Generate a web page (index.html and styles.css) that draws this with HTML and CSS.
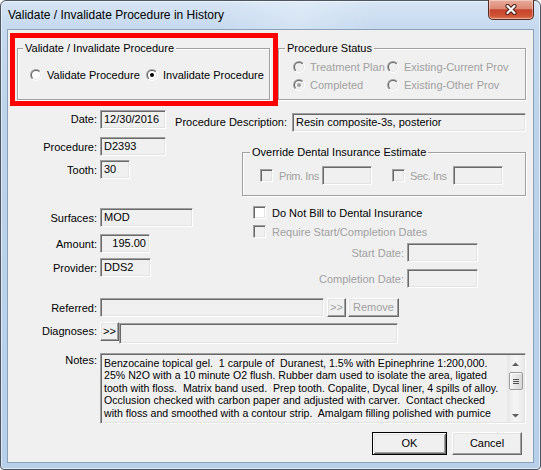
FILE: index.html
```html
<!DOCTYPE html>
<html>
<head>
<meta charset="utf-8">
<title>Validate / Invalidate Procedure in History</title>
<link rel="stylesheet" href="styles.css">
</head>
<body>
<svg class="defs" width="0" height="0" aria-hidden="true">
  <defs>
    <linearGradient id="rgo" x1="0" y1="0" x2="1" y2="1"><stop offset="0.5" stop-color="#a0a0a0"/><stop offset="0.5" stop-color="#ffffff"/></linearGradient>
    <linearGradient id="rgi" x1="0" y1="0" x2="1" y2="1"><stop offset="0.5" stop-color="#696969"/><stop offset="0.5" stop-color="#e3e3e3"/></linearGradient>
  </defs>
</svg>
<div class="window">
  <div class="titlebar">
    <span class="title">Validate / Invalidate Procedure in History</span>
    <div class="close">
      <svg width="14" height="11" viewBox="0 0 14 11"><path d="M3.5 2 L10.5 9 M10.5 2 L3.5 9" stroke="#4a1d16" stroke-width="4.2" stroke-linecap="round"/><path d="M3.5 2 L10.5 9 M10.5 2 L3.5 9" stroke="#ffffff" stroke-width="2.2" stroke-linecap="round"/></svg>
    </div>
  </div>
  <div class="client">
    <div class="highlight"></div>

    <div class="top-row">
      <fieldset class="group g1">
        <legend>Validate / Invalidate Procedure</legend>
        <div class="radios r1">
          <label class="opt o1"><svg class="rb" viewBox="0 0 12 12"><circle cx="6" cy="6" r="6" fill="url(#rgo)"/><circle cx="6" cy="6" r="5" fill="url(#rgi)"/><circle cx="6" cy="6" r="4" fill="#fff"/></svg>Validate Procedure</label>
          <label class="opt"><svg class="rb" viewBox="0 0 12 12"><circle cx="6" cy="6" r="6" fill="url(#rgo)"/><circle cx="6" cy="6" r="5" fill="url(#rgi)"/><circle cx="6" cy="6" r="4" fill="#fff"/><circle cx="6" cy="6" r="2" fill="#000"/></svg>Invalidate Procedure</label>
        </div>
      </fieldset>
      <fieldset class="group g2">
        <legend>Procedure Status</legend>
        <div class="radios r2 dis">
          <label class="opt"><svg class="rb" viewBox="0 0 12 12"><circle cx="6" cy="6" r="6" fill="url(#rgo)"/><circle cx="6" cy="6" r="5" fill="url(#rgi)"/><circle cx="6" cy="6" r="4" fill="#f0f0f0"/></svg>Treatment Plan</label>
          <label class="opt"><svg class="rb" viewBox="0 0 12 12"><circle cx="6" cy="6" r="6" fill="url(#rgo)"/><circle cx="6" cy="6" r="5" fill="url(#rgi)"/><circle cx="6" cy="6" r="4" fill="#f0f0f0"/></svg>Existing-Current Prov</label>
          <label class="opt"><svg class="rb" viewBox="0 0 12 12"><circle cx="6" cy="6" r="6" fill="url(#rgo)"/><circle cx="6" cy="6" r="5" fill="url(#rgi)"/><circle cx="6" cy="6" r="4" fill="#f0f0f0"/><circle cx="6" cy="6" r="2" fill="#a0a0a0"/></svg>Completed</label>
          <label class="opt"><svg class="rb" viewBox="0 0 12 12"><circle cx="6" cy="6" r="6" fill="url(#rgo)"/><circle cx="6" cy="6" r="5" fill="url(#rgi)"/><circle cx="6" cy="6" r="4" fill="#f0f0f0"/></svg>Existing-Other Prov</label>
        </div>
      </fieldset>
    </div>

    <div class="date-row">
      <span class="lbl">Date:</span>
      <div class="box w66">12/30/2016</div>
      <span class="desc-lbl">Procedure Description:</span>
      <div class="box desc">Resin composite-3s, posterior</div>
    </div>

    <div class="main">
      <div class="col-left">
        <div class="field f-proc"><span class="lbl">Procedure:</span><div class="box w66">D2393</div></div>
        <div class="field f-tooth"><span class="lbl">Tooth:</span><div class="box w30">30</div></div>
        <div class="field f-surf"><span class="lbl">Surfaces:</span><div class="box w93">MOD</div></div>
        <div class="field f-amt"><span class="lbl">Amount:</span><div class="box w50 num">195.00</div></div>
        <div class="field f-prov"><span class="lbl">Provider:</span><div class="box w51">DDS2</div></div>
      </div>
      <div class="col-right">
        <fieldset class="group g3">
          <legend>Override Dental Insurance Estimate</legend>
          <div class="ins-row">
            <span class="cb dis"></span><span class="ins-lbl dis-text">Prim. Ins</span><div class="box w50"></div>
            <span class="cb dis cb2"></span><span class="ins-lbl l2 dis-text">Sec. Ins</span><div class="box w50"></div>
          </div>
        </fieldset>
        <div class="check-row c1"><span class="cb"></span><span class="cb-text">Do Not Bill to Dental Insurance</span></div>
        <div class="check-row"><span class="cb dis"></span><span class="cb-text dis-text">Require Start/Completion Dates</span></div>
        <div class="dfield d1"><span class="rlbl dis-text">Start Date:</span><div class="box w71"></div></div>
        <div class="dfield d2"><span class="rlbl dis-text">Completion Date:</span><div class="box w71"></div></div>
      </div>
    </div>

    <div class="ref-row">
      <span class="lbl">Referred:</span>
      <div class="box w224"></div>
      <div class="btn small dis-text">&gt;&gt;</div>
      <div class="btn remove dis-text">Remove</div>
    </div>

    <div class="diag-row">
      <span class="lbl">Diagnoses:</span>
      <div class="btn small">&gt;&gt;</div>
      <div class="box diag"></div>
    </div>

    <div class="notes-row">
      <span class="lbl notes-lbl">Notes:</span>
      <div class="notes">
        <div class="notes-text">
          <div class="ln">Benzocaine topical gel.  1 carpule of  Duranest, 1.5% with Epinephrine 1:200,000.</div>
          <div class="ln">25% N2O with a 10 minute O2 flush. Rubber dam used to isolate the area, ligated</div>
          <div class="ln">tooth with floss.  Matrix band used.  Prep tooth. Copalite, Dycal liner, 4 spills of alloy.</div>
          <div class="ln">Occlusion checked with carbon paper and adjusted with carver.  Contact checked</div>
          <div class="ln">with floss and smoothed with a contour strip.  Amalgam filling polished with pumice</div>
        </div>
        <div class="vscroll">
          <div class="sarrow"><svg width="7" height="4" viewBox="0 0 7 4"><path d="M0 4 L3.5 0.5 L7 4 Z" fill="#5d5d5d"/></svg></div>
          <div class="strack">
            <div class="sthumb"><span></span><span></span><span></span></div>
          </div>
          <div class="sarrow down"><svg width="7" height="4" viewBox="0 0 7 4"><path d="M0 0 L3.5 3.5 L7 0 Z" fill="#5d5d5d"/></svg></div>
        </div>
      </div>
    </div>

    <div class="actions">
      <div class="btn default ok">OK</div>
      <div class="btn cancel">Cancel</div>
    </div>
  </div>
</div>
</body>
</html>
```

FILE: styles.css
```css
* { box-sizing: border-box; }
html, body { margin: 0; padding: 0; }
body {
  width: 541px;
  height: 470px;
  overflow: hidden;
  background: #ffffff;
  font-family: "Liberation Sans", Arial, sans-serif;
  font-size: 11px;
  color: #000;
}
.defs { position: absolute; width: 0; height: 0; }

/* window frame */
.window {
  width: 541px;
  height: 470px;
  border: 1px solid #4d5661;
  border-radius: 6px 6px 4px 4px;
  background: linear-gradient(to bottom, #d6e5f5 0px, #c5d9ef 28px, #bcd3eb 120px, #b7cfe9 100%);
  box-shadow: inset 0 0 0 1px rgba(255,255,255,0.55);
  padding: 0 6px 6px 6px;
  display: flex;
  flex-direction: column;
}
.titlebar {
  height: 28px;
  flex: none;
  display: flex;
  align-items: flex-start;
  margin: 0 -6px;
  padding: 0 6px 0 7px;
  background: linear-gradient(100deg, rgba(255,255,255,0) 40%, rgba(255,255,255,0.25) 55%, rgba(255,255,255,0) 70%);
}
.title {
  font-size: 12px;
  line-height: 28px;
  color: #000;
}
.close {
  margin-left: auto;
  margin-top: -1px;
  width: 46px;
  height: 20px;
  border: 1px solid #5a2a22;
  border-top: none;
  border-radius: 0 0 5px 5px;
  background: linear-gradient(to bottom, #e9ab9b 0%, #dc8a74 45%, #c7442b 52%, #cf5436 85%, #e0865d 100%);
  box-shadow: inset 0 0 0 1px rgba(255,255,255,0.35);
  display: flex;
  align-items: center;
  justify-content: center;
}
.client {
  flex: 1;
  position: relative;
  border: 1px solid #8ba1b9;
  background: #f0f0f0;
  padding-right: 7px;
}

/* annotation overlay */
.highlight {
  position: absolute;
  left: 2px;
  top: 3px;
  width: 268px;
  height: 73px;
  border: 5px solid #ff0000;
  pointer-events: none;
}

/* group boxes */
.group {
  margin: 0;
  padding: 0;
  min-width: 0;
  border: 1px solid #a0a0a0;
  box-shadow: 1px 1px 0 #fff, inset 1px 1px 0 #fff;
}
.group legend {
  margin-left: 5px;
  padding: 0 2px;
  line-height: 13px;
  background: #f0f0f0;
}
.g2 legend { margin-left: 6px; }
.g3 legend { margin-left: 7px; }
.top-row {
  display: flex;
  gap: 8px;
  padding: 12px 0 0 9px;
}
.g1 { width: 253px; height: 58px; }
.g2 { width: 248px; height: 58px; }

.radios { display: grid; }
.r1 { grid-template-columns: 116px auto; padding: 11px 0 0 12px; }
.r2 { grid-template-columns: 94px auto; padding: 3px 0 0 14px; }
.opt {
  display: flex;
  align-items: center;
  height: 18px;
  white-space: nowrap;
}
.rb { width: 12px; height: 12px; margin-right: 5px; flex: none; }
.dis .opt, .dis-text { color: #a0a0a0; }

/* text boxes */
.box {
  height: 19px;
  flex: none;
  background: #f0f0f0;
  border-style: solid;
  border-width: 1px;
  border-color: #a0a0a0 #fff #fff #a0a0a0;
  box-shadow: inset 1px 1px 0 #696969, inset -1px -1px 0 #e3e3e3;
  padding: 0 3px;
  line-height: 17px;
  white-space: nowrap;
  overflow: hidden;
}
.w30 { width: 30px; }
.w50 { width: 50px; }
.w51 { width: 51px; }
.w66 { width: 66px; }
.w71 { width: 71px; }
.w93 { width: 93px; }
.w224 { width: 224px; }
.num { text-align: right; }

.lbl {
  width: 89px;
  flex: none;
  text-align: right;
  margin-right: 3px;
  white-space: nowrap;
}

.date-row {
  display: flex;
  align-items: flex-start;
  margin-top: 10px;
  height: 22px;
}
.date-row .lbl { line-height: 19px; }
.desc-lbl {
  margin-left: auto;
  margin-right: 5px;
  margin-top: 3px;
  line-height: 19px;
  white-space: nowrap;
}
.box.desc { width: 234px; margin-top: 3px; }

/* main two-column block */
.main {
  display: flex;
  margin-top: 5px;
}
.col-left { width: 234px; flex: none; }
.col-right { width: 284px; flex: none; }
.field { display: flex; align-items: center; }
.f-tooth { margin-top: 4px; }
.f-surf { margin-top: 29px; }
.f-amt { margin-top: 7px; }
.f-prov { margin-top: 5px; }

.g3 {
  width: 284px;
  height: 50px;
  margin-top: 9px;
}
.ins-row {
  display: flex;
  align-items: center;
  height: 19px;
  margin: 7px 0 0 17px;
}
.ins-lbl { width: 43px; margin-left: 6px; white-space: nowrap; flex: none; letter-spacing: -0.4px; }
.ins-lbl.l2 { margin-left: 5px; }
.cb2 { margin-left: 20px; }

.cb {
  width: 13px;
  height: 13px;
  flex: none;
  display: inline-block;
  background: #fff;
  border-style: solid;
  border-width: 1px;
  border-color: #a0a0a0 #fff #fff #a0a0a0;
  box-shadow: inset 1px 1px 0 #696969, inset -1px -1px 0 #e3e3e3;
}
.cb.dis { background: #f0f0f0; }

.check-row {
  display: flex;
  align-items: center;
  height: 19px;
  padding-left: 11px;
}
.check-row.c1 { margin-top: 7px; }
.cb-text { margin-left: 6px; white-space: nowrap; }

.dfield { display: flex; align-items: center; }
.dfield.d1 { margin-top: 2px; }
.dfield.d2 { margin-top: 7px; }
.rlbl { width: 162px; text-align: right; margin-right: 3px; white-space: nowrap; }

/* buttons */
.btn {
  flex: none;
  background: #f0f0f0;
  border-style: solid;
  border-width: 1px;
  border-color: #fff #696969 #696969 #fff;
  box-shadow: inset -1px -1px 0 #a0a0a0, inset 1px 1px 0 #e3e3e3;
  text-align: center;
  white-space: nowrap;
}
.btn.small { width: 19px; height: 19px; line-height: 16px; }
.btn.remove { width: 51px; height: 19px; line-height: 16px; margin-left: 2px; }

.ref-row {
  display: flex;
  align-items: center;
  margin-top: 10px;
}
.ref-row .box { margin-right: 3px; }

.diag-row {
  display: flex;
  align-items: flex-start;
  margin-top: 5px;
  height: 22px;
}
.diag-row .lbl { line-height: 19px; }
.box.diag { width: 279px; height: 21px; margin-top: 1px; }

.notes-row {
  display: flex;
  align-items: flex-start;
  margin-top: 9px;
}
.notes-lbl { margin-top: 1px; line-height: 13px; }
.notes {
  width: 426px;
  height: 71px;
  display: flex;
  background: #f0f0f0;
  border-style: solid;
  border-width: 1px;
  border-color: #a0a0a0 #fff #fff #a0a0a0;
  box-shadow: inset 1px 1px 0 #696969, inset -1px -1px 0 #e3e3e3;
  padding: 1px;
}
.notes-text {
  flex: 1;
  overflow: hidden;
  padding: 2px 0 0 2px;
  font-size: 10.6px;
  line-height: 12.4px;
}
.ln { white-space: pre; }

.vscroll {
  width: 17px;
  flex: none;
  display: flex;
  flex-direction: column;
  background: linear-gradient(to right, #e6e6e6, #f4f4f4 40%, #f4f4f4 60%, #e9e9e9);
}
.sarrow {
  height: 17px;
  flex: none;
  display: flex;
  align-items: center;
  justify-content: center;
}
.sarrow.down { align-items: flex-end; padding-bottom: 4px; }
.strack { flex: 1; padding: 0 1px 0 2px; }
.sthumb {
  height: 18px;
  border: 1px solid #9a9a9a;
  border-radius: 2px;
  background: linear-gradient(to right, #f4f4f4, #e6e6e6 50%, #d8d8d8);
  box-shadow: inset 1px 1px 0 #fff;
  display: flex;
  flex-direction: column;
  align-items: center;
  justify-content: center;
  gap: 1px;
}
.sthumb span {
  width: 6px;
  height: 1px;
  background: #505050;
}

.actions {
  display: flex;
  justify-content: flex-end;
  gap: 5px;
  margin-top: 8px;
  margin-right: 4px;
}
.btn.ok, .btn.cancel { height: 23px; line-height: 20px; }
.btn.ok { width: 75px; }
.btn.cancel { width: 70px; }
.btn.default {
  border: 1px solid #000;
  box-shadow: inset 1px 1px 0 #fff, inset -1px -1px 0 #696969, inset 2px 2px 0 #e3e3e3, inset -2px -2px 0 #a0a0a0;
}
```
